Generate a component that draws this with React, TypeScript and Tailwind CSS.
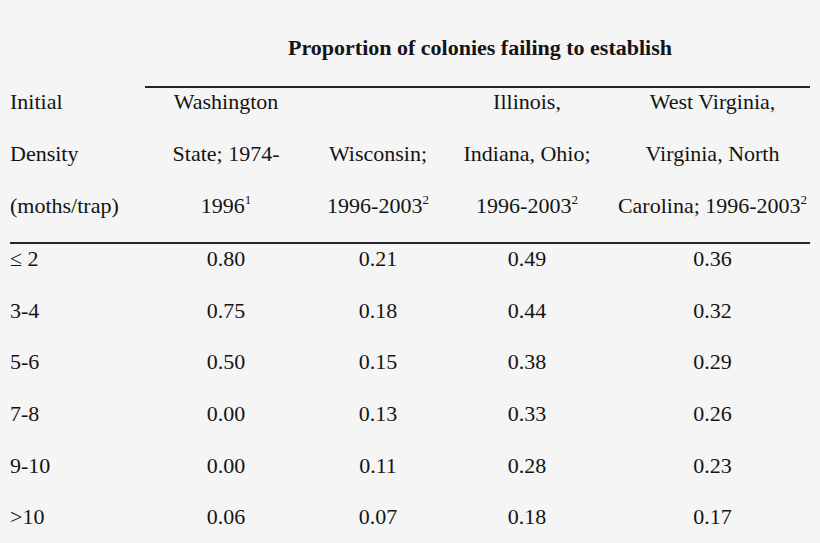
const rows = [
  ["≤ 2", "0.80", "0.21", "0.49", "0.36"],
  ["3-4", "0.75", "0.18", "0.44", "0.32"],
  ["5-6", "0.50", "0.15", "0.38", "0.29"],
  ["7-8", "0.00", "0.13", "0.33", "0.26"],
  ["9-10", "0.00", "0.11", "0.28", "0.23"],
  [">10", "0.06", "0.07", "0.18", "0.17"],
];

const cols = "grid grid-cols-[145px_162px_142px_156px_1fr]";

const App = () => {
  return (
    <div className="w-[820px] h-[543px] overflow-hidden bg-[#f5f5f5] text-[#141414] font-['Liberation_Serif',serif] text-[22px] leading-[26px]">
      {/* title */}
      <div className={cols}>
        <div className="col-start-2 col-span-4 mr-[10px] border-b-2 border-[#262626] h-[88px] pt-[35px] pl-[5px] text-center font-bold">
          Proportion of colonies failing to establish
        </div>
      </div>

      {/* column heads */}
      <div className={`${cols} items-end pt-px pb-[23px] mx-0`}>
        <div className="pl-[10px] flex flex-col gap-[26px]">
          <div>Initial</div>
          <div>Density</div>
          <div>(moths/trap)</div>
        </div>
        <div className="flex flex-col gap-[26px] text-center">
          <div>Washington</div>
          <div>State; 1974-</div>
          <div>
            1996<sup className="text-[13px] -top-[9px]">1</sup>
          </div>
        </div>
        <div className="flex flex-col gap-[26px] text-center">
          <div>Wisconsin;</div>
          <div>
            1996-2003<sup className="text-[13px] -top-[9px]">2</sup>
          </div>
        </div>
        <div className="flex flex-col gap-[26px] text-center">
          <div>Illinois,</div>
          <div>Indiana, Ohio;</div>
          <div>
            1996-2003<sup className="text-[13px] -top-[9px]">2</sup>
          </div>
        </div>
        <div className="flex flex-col gap-[26px] text-center">
          <div>West Virginia,</div>
          <div>Virginia, North</div>
          <div>
            Carolina; 1996-2003<sup className="text-[13px] -top-[9px]">2</sup>
          </div>
        </div>
      </div>
      <div className="mx-[10px] border-t-2 border-[#262626]" />

      {/* body */}
      <div className="pt-[2px]">
        {rows.map((r) => (
          <div key={r[0]} className={`${cols} h-[51.7px]`}>
            <div className="pl-[10px]">{r[0]}</div>
            <div className="text-center">{r[1]}</div>
            <div className="text-center">{r[2]}</div>
            <div className="text-center">{r[3]}</div>
            <div className="text-center">{r[4]}</div>
          </div>
        ))}
      </div>
    </div>
  );
};

export default App;
